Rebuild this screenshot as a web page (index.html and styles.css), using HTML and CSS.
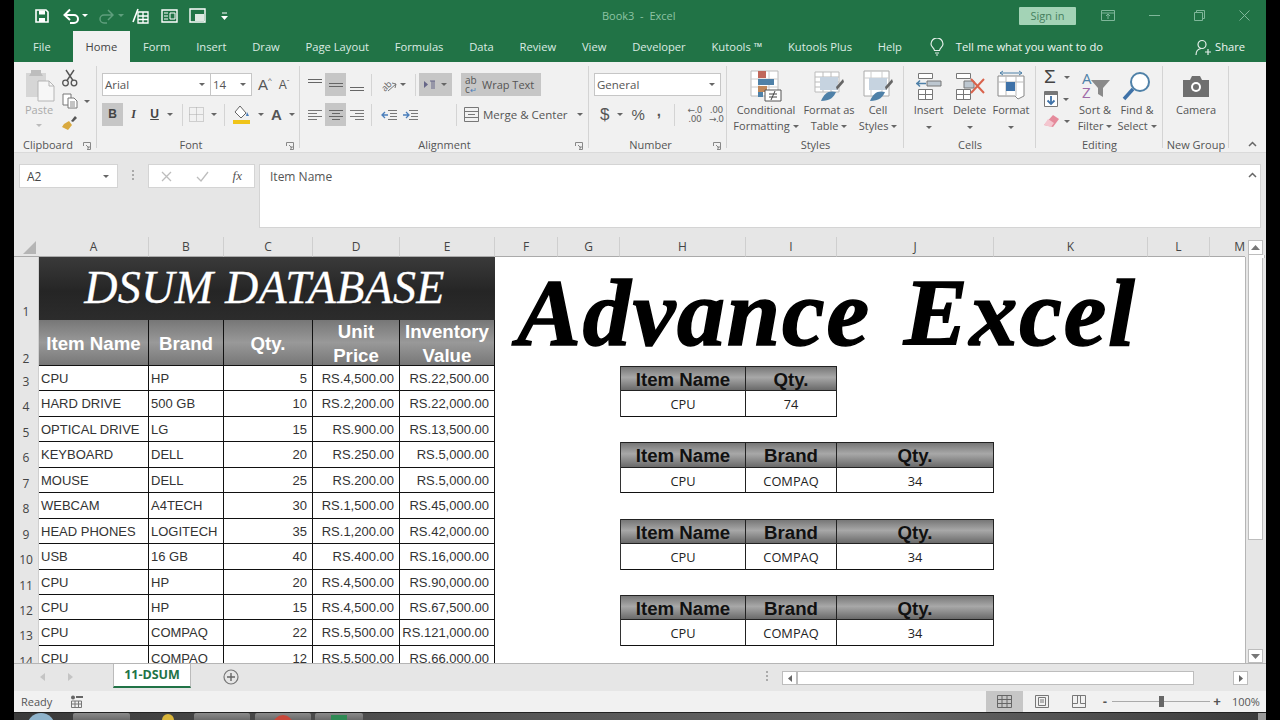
FILE: index.html
```html
<!DOCTYPE html>
<html>

<head>
    <meta charset='utf-8'>
    <title>Book3 - Excel</title>
    <meta name='viewport' content='width=device-width, initial-scale=1'>
    <link rel="stylesheet" href="styles.css">
</head>

<body>
    <div class="app">
        <div class="titlebar">
            <div class="qat">
                <svg width="16" height="16" viewBox="0 0 16 16"><path d="M2 2h10l2 2v10H2z" fill="none" stroke="#fff" stroke-width="1.6"/><path d="M5 2.500h6v4H5zM5 10h6v4H5z" fill="#fff"/></svg>
                <svg class="q_undo" width="17" height="16" viewBox="0 0 17 16"><path d="M2 7h9a4 4 0 0 1 0 8H7" fill="none" stroke="#fff" stroke-width="2"/><path d="M7 1.500L1.500 7 7 12" fill="none" stroke="#fff" stroke-width="2"/></svg>
                <span class="caret white"></span>
                <svg class="q_redo" width="16" height="16" viewBox="0 0 16 16"><path d="M14 7H6a4 4 0 0 0 0 8h3M10 2l5 5-5 5" fill="none" stroke="#5f9f7d" stroke-width="1.5"/></svg>
                <span class="caret faded"></span>
                <svg class="q_form" width="17" height="16" viewBox="0 0 17 16"><path d="M6 4h10v11H6zM6 8h10M6 11.500h10M11 4v11" fill="none" stroke="#fff" stroke-width="1.3"/><path d="M1 14L6 1" stroke="#fff" stroke-width="1.6"/></svg>
                <svg class="q_view" width="17" height="14" viewBox="0 0 17 14"><path d="M1 1h15v12H1z" fill="none" stroke="#fff" stroke-width="1.4"/><path d="M3 4h4M3 7h4M3 10h4M9 4h5v6H9z" fill="none" stroke="#fff"/></svg>
                <svg class="q_page" width="17" height="15" viewBox="0 0 17 15"><path d="M1 1h15v13H1z" fill="none" stroke="#fff" stroke-width="1.4"/><path d="M6 6h9v7H6z" fill="#dfe9e3"/></svg>
                <svg class="q_more" width="7" height="8" viewBox="0 0 7 8"><path d="M1 1h5" stroke="#fff"/><path d="M0 4h7L3.500 8z" fill="#fff"/></svg>
            </div>
            <div class="doc_title">Book3 &nbsp;-&nbsp; Excel</div>
            <div class="win_ctrls">
                <span class="signin">Sign in</span>
                <svg width="14" height="11" viewBox="0 0 14 11"><path d="M.5.500h13v10H.500zM.5 3h13M7 9V4M5 6l2-2 2 2" fill="none" stroke="#7fb79a"/></svg>
                <svg class="w_min" width="11" height="3" viewBox="0 0 11 3"><path d="M0 1.500h11" stroke="#7fb79a"/></svg>
                <svg class="w_max" width="11" height="11" viewBox="0 0 11 11"><path d="M.5 2.500h8v8h-8zM2.500 2.500v-2h8v8h-2" fill="none" stroke="#7fb79a"/></svg>
                <svg class="w_close" width="11" height="11" viewBox="0 0 11 11"><path d="M.5.500l10 10M10.500.500l-10 10" stroke="#7fb79a"/></svg>
            </div>
        </div>

        <div class="tabs">
            <span class="tab tab_file">File</span>
            <span class="tab active">Home</span>
            <span class="tab">Form</span>
            <span class="tab">Insert</span>
            <span class="tab">Draw</span>
            <span class="tab">Page Layout</span>
            <span class="tab">Formulas</span>
            <span class="tab">Data</span>
            <span class="tab">Review</span>
            <span class="tab">View</span>
            <span class="tab">Developer</span>
            <span class="tab">Kutools ™</span>
            <span class="tab">Kutools Plus</span>
            <span class="tab">Help</span>
            <svg class="bulb" width="14" height="18" viewBox="0 0 14 18"><path d="M4.500 12.500C4 9.500 1 9 1 6a6 6 0 0 1 12 0c0 3-3 3.500-3.500 6.500zM5 15h4M6 17h2" fill="none" stroke="#e4efe9" stroke-width="1.200"/></svg>
            <span class="tell">Tell me what you want to do</span>
            <span class="share">
                <svg width="16" height="17" viewBox="0 0 16 17"><circle cx="7" cy="5.500" r="4" fill="none" stroke="#e4efe9" stroke-width="1.200"/><path d="M1 16c0-4 2-6 5-6.500M10 13h6M13 10v6" fill="none" stroke="#e4efe9" stroke-width="1.200"/></svg>
                Share
            </span>
        </div>

        <div class="ribbon">
            <div class="group g_clip">
                <div class="g_body clip_body">
                    <div class="paste">
                        <svg width="30" height="34" viewBox="0 0 30 34"><path d="M1 5h20v24H1z" fill="#d6d6d6"/><path d="M6 5V2h10v3l2 3H4z" fill="#bdbdbd"/><path d="M13 13h11l5 5v15H13z" fill="#f7f7f7" stroke="#b5b5b5"/><path d="M24 13v5h5" fill="none" stroke="#b5b5b5"/></svg>
                        <span class="big_lbl">Paste</span>
                        <span class="caret faded_gray"></span>
                    </div>
                    <div class="clip_small">
                        <svg width="16" height="18" viewBox="0 0 16 18"><circle cx="3.500" cy="14" r="2.800" fill="none" stroke="#555" stroke-width="1.300"/><circle cx="12" cy="14" r="2.800" fill="none" stroke="#555" stroke-width="1.300"/><path d="M5 11.500L12 1M11 11.500L4 1" stroke="#555" stroke-width="1.400"/></svg>
                        <div class="copy_row">
                            <svg width="16" height="16" viewBox="0 0 16 16"><path d="M1 1h8v11H1z" fill="#fff" stroke="#777"/><path d="M6 5h6l3 3v7H6z" fill="#fff" stroke="#777"/><path d="M8 9h5M8 11h5M8 13h5" stroke="#888"/></svg>
                            <span class="caret"></span>
                        </div>
                        <svg width="16" height="16" viewBox="0 0 16 16"><path d="M9 6l4-5 2 2-4 4z" fill="#555"/><path d="M2 9l5-3 3 4-4 5-6-3z" fill="#d9a93e"/></svg>
                    </div>
                </div>
                <div class="g_label lbl_clip">Clipboard <svg class="launch" width="8" height="8" viewBox="0 0 8 8"><path d="M.5 4V.5H7.500V7.500H4M3 3l3 3M4 6h2V4" fill="none" stroke="#888"/></svg></div>
            </div>

            <div class="group g_font">
                <div class="g_body">
                    <div class="row">
                        <div class="combo font_name">Arial<span class="caret"></span></div>
                        <div class="combo font_size">14<span class="caret"></span></div>
                        <span class="glyph a_up">A<sup>^</sup></span>
                        <span class="glyph a_down">A<sup>ˇ</sup></span>
                    </div>
                    <div class="row">
                        <span class="btn on b_btn">B</span>
                        <span class="btn i_btn">I</span>
                        <span class="btn u_btn">U</span>
                        <span class="caret"></span>
                        <span class="vsep s1"></span>
                        <svg class="ic_border" width="15" height="15" viewBox="0 0 15 15"><path d="M.5.500h14v14H.500zM7.500.500v14M.5 7.500h14" fill="none" stroke="#aaa" stroke-dasharray="1 1"/></svg>
                        <span class="caret"></span>
                        <span class="vsep s2"></span>
                        <svg class="ic_fill" width="19" height="19" viewBox="0 0 19 19"><path d="M8 1l6 7-5 5-6-6z" fill="#fff" stroke="#666"/><path d="M15 7l2 4-3 0z" fill="#4a7ebb"/><path d="M1 15h17v4H1z" fill="#f0c419"/></svg>
                        <span class="caret"></span>
                        <span class="glyph a_color">A</span>
                        <span class="caret"></span>
                    </div>
                </div>
                <div class="g_label shift">Font<svg class="launch" width="8" height="8" viewBox="0 0 8 8"><path d="M.5 4V.5H7.500V7.500H4M3 3l3 3M4 6h2V4" fill="none" stroke="#888"/></svg></div>
            </div>

            <div class="group g_align">
                <div class="g_body">
                    <div class="row al_row">
                        <span class="al_btn"><svg width="14" height="14" viewBox="0 0 14 14"><path d="M0 1.500h14M0 4.500h14" stroke="#666"/></svg></span>
                        <span class="al_btn on"><svg width="14" height="14" viewBox="0 0 14 14"><path d="M0 5.500h14M0 8.500h14" stroke="#666"/></svg></span>
                        <span class="al_btn"><svg width="14" height="14" viewBox="0 0 14 14"><path d="M0 9.500h14M0 12.500h14" stroke="#666"/></svg></span>
                        <span class="vsep s3"></span>
                        <svg class="ic_orient" width="16" height="16" viewBox="0 0 16 16"><text x="1" y="12" class="orient_txt" transform="rotate(-45 6 10)">ab</text><path d="M7 14l8-7M11 6l4 1-1 4" fill="none" stroke="#777"/></svg>
                        <span class="caret"></span>
                        <span class="vsep s4"></span>
                        <span class="dir_btn on"><svg width="12" height="9" viewBox="0 0 12 9"><path d="M0 1l4 3.500L0 8z" fill="#668"/><path d="M6 1h5M8 1v8M10 1v8" stroke="#668"/></svg><span class="caret"></span></span>
                        <span class="wrap on">
                            <span class="wrap_ic">ab<br>c<i>↵</i></span>
                            Wrap Text
                        </span>
                    </div>
                    <div class="row al_row">
                        <span class="al_btn"><svg width="14" height="12" viewBox="0 0 14 12"><path d="M0 1.500h14M0 4.500h9M0 7.500h14M0 10.500h9" stroke="#777"/></svg></span>
                        <span class="al_btn on"><svg width="14" height="12" viewBox="0 0 14 12"><path d="M0 1.500h14M3 4.500h8M0 7.500h14M3 10.500h8" stroke="#666"/></svg></span>
                        <span class="al_btn"><svg width="14" height="12" viewBox="0 0 14 12"><path d="M0 1.500h14M5 4.500h9M0 7.500h14M5 10.500h9" stroke="#777"/></svg></span>
                        <span class="vsep s3"></span>
                        <svg class="ic_ind1" width="16" height="12" viewBox="0 0 16 12"><path d="M7 1.500h9M9 4.500h7M9 7.500h7M7 10.500h9" stroke="#777"/><path d="M7 6H1M4 3L1 6l3 3" fill="none" stroke="#4a7ebb" stroke-width="1.300"/></svg>
                        <svg class="ic_ind2" width="16" height="12" viewBox="0 0 16 12"><path d="M7 1.500h9M9 4.500h7M9 7.500h7M7 10.500h9" stroke="#777"/><path d="M1 6h6M4 3l3 3-3 3" fill="none" stroke="#4a7ebb" stroke-width="1.300"/></svg>
                        <span class="vsep s5"></span>
                        <span class="merge">
                            <svg width="15" height="15" viewBox="0 0 15 15"><path d="M.5.500h14v14H.500zM.5 4.500h14M.5 10.500h14M4 7.500h7" fill="none" stroke="#777"/></svg>
                            Merge &amp; Center
                            <span class="caret"></span>
                        </span>
                    </div>
                </div>
                <div class="g_label">Alignment<svg class="launch" width="8" height="8" viewBox="0 0 8 8"><path d="M.5 4V.5H7.500V7.500H4M3 3l3 3M4 6h2V4" fill="none" stroke="#888"/></svg></div>
            </div>

            <div class="group g_num">
                <div class="g_body">
                    <div class="row">
                        <div class="combo num_fmt">General<span class="caret"></span></div>
                    </div>
                    <div class="row">
                        <span class="glyph n_dollar">$</span>
                        <span class="caret"></span>
                        <span class="glyph n_pct">%</span>
                        <span class="glyph n_comma">,</span>
                        <span class="vsep s6"></span>
                        <span class="dec">←.0<br>.00</span>
                        <span class="dec">.00<br>→.0</span>
                    </div>
                </div>
                <div class="g_label shift">Number<svg class="launch" width="8" height="8" viewBox="0 0 8 8"><path d="M.5 4V.5H7.500V7.500H4M3 3l3 3M4 6h2V4" fill="none" stroke="#888"/></svg></div>
            </div>

            <div class="group g_styles">
                <div class="g_body big_row">
                    <div class="big w_cond">
                        <svg width="32" height="32" viewBox="0 0 32 32"><path d="M1 1h27v25H1z" fill="#fff" stroke="#bbb"/><path d="M9 1v25M19 1v25M1 9h27M1 17h27" stroke="#ccc"/><path d="M8 1h8v7H8z" fill="#c0675a"/><path d="M8 9h16v6H8z" fill="#4f81a8"/><path d="M8 16h9v6H8z" fill="#c0875a"/><path d="M8 22h5v5H8z" fill="#4f81a8"/><path d="M15 20h16v11H15z" fill="#fff" stroke="#555"/><path d="M19 24h8M19 27h8M25 21l-4 9" stroke="#444"/></svg>
                        <span class="big_lbl">Conditional<br>Formatting <span class="caret"></span></span>
                    </div>
                    <div class="big w_tbl">
                        <svg width="30" height="32" viewBox="0 0 30 32"><path d="M1 2h24v20H1z" fill="#fff" stroke="#bbb"/><path d="M1 7h24M1 12h24M1 17h24M9 2v20M17 2v20" stroke="#bbb"/><path d="M6 7h18v13H6z" fill="#c6d3e0"/><path d="M22 17l7-8 1 3-7 8z" fill="#666"/><path d="M7 31c3-8 8-11 15-9-2 5-6 9-15 9z" fill="#4f81a8"/></svg>
                        <span class="big_lbl">Format as<br>Table <span class="caret"></span></span>
                    </div>
                    <div class="big w_cell">
                        <svg width="30" height="32" viewBox="0 0 30 32"><path d="M1 1h25v25H1z" fill="#fff" stroke="#aaa"/><path d="M1 8h25M8 1v25M19 1v25" stroke="#ccc"/><path d="M6 8h18v12H6z" fill="#c6d3e0"/><path d="M22 17l7-8 1 3-7 8z" fill="#666"/><path d="M7 31c3-8 8-11 15-9-2 5-6 9-15 9z" fill="#4f81a8"/></svg>
                        <span class="big_lbl">Cell<br>Styles <span class="caret"></span></span>
                    </div>
                </div>
                <div class="g_label center">Styles</div>
            </div>

            <div class="group g_cells">
                <div class="g_body big_row">
                    <div class="big w_ins">
                        <svg width="28" height="28" viewBox="0 0 28 28"><path d="M3.500 1.500h14v5h-14zM3.500 17.500h14v10h-14zM10.500 17.500v10M3.500 22.500h14" fill="#fff" stroke="#777"/><path d="M12 9h14v5H12z" fill="#bdc7d0" stroke="#777"/><path d="M11 11.500H1M5 8.500l-3 3 3 3" fill="none" stroke="#4f81a8" stroke-width="1.500"/></svg>
                        <span class="big_lbl">Insert</span>
                        <span class="caret"></span>
                    </div>
                    <div class="big w_del">
                        <svg width="30" height="28" viewBox="0 0 30 28"><path d="M1.500 1.500h14v5h-14zM1.500 17.500h14v10h-14zM8.500 17.500v10M1.500 22.500h14" fill="#fff" stroke="#777"/><path d="M9 9h10v7H9z" fill="#bdc7d0" stroke="#777"/><path d="M16 7l13 14M29 7L16 21" stroke="#d9634c" stroke-width="2"/></svg>
                        <span class="big_lbl">Delete</span>
                        <span class="caret"></span>
                    </div>
                    <div class="big w_fmt">
                        <svg width="28" height="30" viewBox="0 0 28 30"><path d="M1 5h26v20l-6 3-3-3H1z" fill="#fff" stroke="#888"/><path d="M1 11h26M9 5v20M19 5v20" stroke="#bbb"/><path d="M9 11h9v9H9z" fill="#3f72a8"/><path d="M3 2h22M6 0L3 2l3 2M22 0l3 2-3 2" fill="none" stroke="#4f81a8"/></svg>
                        <span class="big_lbl">Format</span>
                        <span class="caret"></span>
                    </div>
                </div>
                <div class="g_label center">Cells</div>
            </div>

            <div class="group g_edit">
                <div class="g_body big_row">
                    <div class="edit_small">
                        <div class="edit_row"><span class="sigma">Σ</span><span class="caret"></span></div>
                        <div class="edit_row"><svg width="14" height="16" viewBox="0 0 14 16"><path d="M.5.500h13v15H.500z" fill="#fff" stroke="#777"/><path d="M.5 1h13v3H.500z" fill="#777"/><path d="M7 5v8M3.500 9.500L7 13l3.500-3.500" fill="none" stroke="#3f72a8" stroke-width="1.800"/></svg><span class="caret"></span></div>
                        <div class="edit_row"><svg width="15" height="12" viewBox="0 0 15 12"><path d="M9 0l6 4-6 8-9-2z" fill="#e58a9b"/><path d="M0 10l4-6 6 4-3 4z" fill="#f4c6cf"/></svg><span class="caret"></span></div>
                    </div>
                    <div class="big w_sort">
                        <svg width="30" height="30" viewBox="0 0 30 30"><text x="2" y="13" class="az_a">A</text><text x="2" y="27" class="az_z">Z</text><path d="M11 9h19l-7 8v9l-5-3v-6z" fill="#8a8a8a"/></svg>
                        <span class="big_lbl">Sort &amp;<br>Filter <span class="caret"></span></span>
                    </div>
                    <div class="big w_find">
                        <svg width="30" height="30" viewBox="0 0 30 30"><circle cx="18" cy="11" r="9" fill="#fff" stroke="#4f81a8" stroke-width="2"/><path d="M11 18L2 28" stroke="#3f72a8" stroke-width="3.500"/></svg>
                        <span class="big_lbl">Find &amp;<br>Select <span class="caret"></span></span>
                    </div>
                </div>
                <div class="g_label center">Editing</div>
            </div>

            <div class="group g_new">
                <div class="g_body big_row">
                    <div class="big w_cam">
                        <svg width="28" height="22" viewBox="0 0 28 22"><path d="M1 5h7l2-4h8l2 4h7v17H1z" fill="#6f6f6f"/><circle cx="14" cy="12" r="5" fill="#fff"/><circle cx="14" cy="12" r="3" fill="#6f6f6f"/></svg>
                        <span class="big_lbl">Camera</span>
                    </div>
                </div>
                <div class="g_label center">New Group</div>
            </div>
            <svg class="collapse" width="9" height="6" viewBox="0 0 9 6"><path d="M1 5l3.500-3.500L8 5" fill="none" stroke="#666" stroke-width="1.500"/></svg>
        </div>

        <div class="formula_bar">
            <div class="name_box">A2<span class="caret"></span></div>
            <div class="grip"></div>
            <div class="fx_box">
                <svg width="11" height="11" viewBox="0 0 11 11"><path d="M1 1l9 9M10 1l-9 9" stroke="#bdbdbd" stroke-width="1.300"/></svg>
                <svg width="13" height="11" viewBox="0 0 13 11"><path d="M1 6l4 4 7-9" fill="none" stroke="#bdbdbd" stroke-width="1.300"/></svg>
                <span class="fx">fx</span>
            </div>
            <div class="formula_input">Item Name
                <svg class="f_chev" width="9" height="6" viewBox="0 0 9 6"><path d="M1 5l3.500-3.500L8 5" fill="none" stroke="#666" stroke-width="1.500"/></svg>
            </div>
        </div>

        <div class="col_heads">
            <div class="corner"><svg width="13" height="13" viewBox="0 0 13 13"><path d="M13 0v13H0z" fill="#b5b5b5"/></svg></div>
            <div class="col ca">A</div>
            <div class="col cb">B</div>
            <div class="col cc">C</div>
            <div class="col cd">D</div>
            <div class="col ce">E</div>
            <div class="col cf">F</div>
            <div class="col cg">G</div>
            <div class="col ch">H</div>
            <div class="col ci">I</div>
            <div class="col cj">J</div>
            <div class="col ck">K</div>
            <div class="col cl">L</div>
            <div class="col cm">M</div>
            <div class="vs_up"><svg width="9" height="5" viewBox="0 0 9 5"><path d="M4.500 0L9 5H0z" fill="#777"/></svg></div>
        </div>

        <div class="sheet">
            <div class="row_nums">
                <div class="rn r1">1</div>
                <div class="rn r2">2</div>
                <div class="rn">3</div>
                <div class="rn">4</div>
                <div class="rn">5</div>
                <div class="rn">6</div>
                <div class="rn">7</div>
                <div class="rn">8</div>
                <div class="rn">9</div>
                <div class="rn">10</div>
                <div class="rn">11</div>
                <div class="rn">12</div>
                <div class="rn">13</div>
                <div class="rn">14</div>
            </div>

            <div class="db">
                <div class="db_title">DSUM DATABASE</div>
                <div class="hd">Item Name</div>
                <div class="hd">Brand</div>
                <div class="hd">Qty.</div>
                <div class="hd">Unit<br>Price</div>
                <div class="hd">Inventory<br>Value</div>

                <div class="td">CPU</div><div class="td">HP</div><div class="td num">5</div><div class="td num">RS.4,500.00</div><div class="td num">RS.22,500.00</div>
                <div class="td">HARD DRIVE</div><div class="td">500 GB</div><div class="td num">10</div><div class="td num">RS.2,200.00</div><div class="td num">RS.22,000.00</div>
                <div class="td">OPTICAL DRIVE</div><div class="td">LG</div><div class="td num">15</div><div class="td num">RS.900.00</div><div class="td num">RS.13,500.00</div>
                <div class="td">KEYBOARD</div><div class="td">DELL</div><div class="td num">20</div><div class="td num">RS.250.00</div><div class="td num">RS.5,000.00</div>
                <div class="td">MOUSE</div><div class="td">DELL</div><div class="td num">25</div><div class="td num">RS.200.00</div><div class="td num">RS.5,000.00</div>
                <div class="td">WEBCAM</div><div class="td">A4TECH</div><div class="td num">30</div><div class="td num">RS.1,500.00</div><div class="td num">RS.45,000.00</div>
                <div class="td">HEAD PHONES</div><div class="td">LOGITECH</div><div class="td num">35</div><div class="td num">RS.1,200.00</div><div class="td num">RS.42,000.00</div>
                <div class="td">USB</div><div class="td">16 GB</div><div class="td num">40</div><div class="td num">RS.400.00</div><div class="td num">RS.16,000.00</div>
                <div class="td">CPU</div><div class="td">HP</div><div class="td num">20</div><div class="td num">RS.4,500.00</div><div class="td num">RS.90,000.00</div>
                <div class="td">CPU</div><div class="td">HP</div><div class="td num">15</div><div class="td num">RS.4,500.00</div><div class="td num">RS.67,500.00</div>
                <div class="td">CPU</div><div class="td">COMPAQ</div><div class="td num">22</div><div class="td num">RS.5,500.00</div><div class="td num">RS.121,000.00</div>
                <div class="td">CPU</div><div class="td">COMPAQ</div><div class="td num">12</div><div class="td num">RS.5,500.00</div><div class="td num">RS.66,000.00</div>
            </div>

            <div class="right_side">
                <div class="big_title">Advance Excel</div>
                <div class="mini two">
                    <div class="m_hd">Item Name</div><div class="m_hd">Qty.</div>
                    <div class="m_td">CPU</div><div class="m_td">74</div>
                </div>
                <div class="mini three">
                    <div class="m_hd">Item Name</div><div class="m_hd">Brand</div><div class="m_hd">Qty.</div>
                    <div class="m_td">CPU</div><div class="m_td">COMPAQ</div><div class="m_td">34</div>
                </div>
                <div class="mini three">
                    <div class="m_hd">Item Name</div><div class="m_hd">Brand</div><div class="m_hd">Qty.</div>
                    <div class="m_td">CPU</div><div class="m_td">COMPAQ</div><div class="m_td">34</div>
                </div>
                <div class="mini three">
                    <div class="m_hd">Item Name</div><div class="m_hd">Brand</div><div class="m_hd">Qty.</div>
                    <div class="m_td">CPU</div><div class="m_td">COMPAQ</div><div class="m_td">34</div>
                </div>
            </div>

            <div class="vscroll">
                <div class="vs_thumb"></div>
                <div class="vs_down"><svg width="9" height="5" viewBox="0 0 9 5"><path d="M0 0h9L4.500 5z" fill="#777"/></svg></div>
            </div>
        </div>

        <div class="sheet_tabs">
            <svg class="nav_l" width="5" height="8" viewBox="0 0 5 8"><path d="M5 0v8L0 4z" fill="#c4c4c4"/></svg>
            <svg class="nav_r" width="5" height="8" viewBox="0 0 5 8"><path d="M0 0v8l5-4z" fill="#c4c4c4"/></svg>
            <div class="sheet_tab">11-DSUM</div>
            <svg class="add_sheet" width="16" height="16" viewBox="0 0 16 16"><circle cx="8" cy="8" r="7" fill="none" stroke="#777" stroke-width="1.200"/><path d="M8 4v8M4 8h8" stroke="#666" stroke-width="1.400"/></svg>
            <div class="grip small_grip"></div>
            <div class="hscroll">
                <div class="hs_btn"><svg width="4" height="7" viewBox="0 0 4 7"><path d="M4 0v7L0 3.500z" fill="#666"/></svg></div>
                <div class="hs_thumb"></div>
                <div class="hs_btn hs_end"><svg width="4" height="7" viewBox="0 0 4 7"><path d="M0 0v7l4-3.500z" fill="#666"/></svg></div>
            </div>
        </div>

        <div class="status">
            <span class="ready">Ready</span>
            <svg width="13" height="13" viewBox="0 0 13 13"><circle cx="3" cy="2.500" r="2" fill="#666"/><path d="M6 1h7v2H6z" fill="#666"/><path d="M1.500 6h10v6.500h-10zM1.500 9h10M5 6v6.500M8.500 6v6.500" fill="none" stroke="#777"/></svg>
            <div class="views">
                <span class="view on"><svg width="15" height="13" viewBox="0 0 15 13"><path d="M.5.500h14v12H.500zM.5 4.500h14M.5 8.500h14M5 .5v12M10 .5v12" fill="none" stroke="#666"/></svg></span>
                <span class="view"><svg width="14" height="13" viewBox="0 0 14 13"><path d="M.5.500h13v12H.500zM3.500 2.500h7v8h-7zM5 5h4M5 7h4" fill="none" stroke="#777"/></svg></span>
                <span class="view"><svg width="14" height="13" viewBox="0 0 14 13"><path d="M.5.500h13v12H.500zM.5 8.500h5v-8M13.500 8.500h-5v-8" fill="none" stroke="#777"/></svg></span>
            </div>
            <div class="zoom">
                <span class="z_sign">-</span>
                <div class="z_track"><span class="z_thumb"></span></div>
                <span class="z_sign">+</span>
                <span class="z_pct">100%</span>
            </div>
        </div>

        <div class="taskbar">
            <span class="orb"></span>
            <span class="task t1"></span>
            <span class="task_gap g1"><span class="gold"></span></span>
            <span class="task t2"></span>
            <span class="task t3"><span class="red"></span></span>
            <span class="task t4"><span class="green"></span></span>
            <span class="tray"></span>
        </div>
    </div>
</body>

</html>
```

FILE: styles.css
```css
* {
    margin: 0;
    padding: 0;
    box-sizing: border-box;
}

html, body {
    width: 1280px;
    height: 720px;
    overflow: hidden;
    background-color: black;
    font-family: "Open Sans", "Liberation Sans", sans-serif;
    font-size: 11px;
    color: #444;
}

svg {
    flex: none;
    display: block;
}

.app {
    width: 1252px;
    height: 720px;
    margin-left: 14px;
    display: flex;
    flex-direction: column;
}

.caret {
    display: inline-block;
    flex: none;
    width: 0;
    height: 0;
    border-left: 3px solid transparent;
    border-right: 3px solid transparent;
    border-top: 3px solid #666;
    vertical-align: middle;
}

.caret.white {
    border-top-color: #fff;
    margin-left: 2px;
}

.caret.faded {
    border-top-color: #5f9f7d;
    margin-left: 4px;
}

.caret.faded_gray {
    border-top-color: #bbb;
}

/* title bar */
.titlebar {
    height: 31px;
    background-color: #217346;
    display: flex;
    align-items: center;
    flex: none;
}

.qat {
    width: 575px;
    padding-left: 20px;
    display: flex;
    align-items: center;
}

.q_undo { margin-left: 13px; }
.q_redo { margin-left: 10px; }
.q_form { margin-left: 8px; }
.q_view { margin-left: 12px; }
.q_page { margin-left: 11px; }
.q_more { margin-left: 15px; }

.doc_title {
    width: 110px;
    padding-left: 13px;
    color: #8dc3a4;
    font-size: 11px;
    white-space: nowrap;
}

.win_ctrls {
    flex: 1;
    display: flex;
    align-items: center;
    padding-left: 320px;
}

.signin {
    width: 57px;
    height: 18px;
    background-color: #a3d3b6;
    color: #467f5f;
    font-size: 11px;
    line-height: 18px;
    text-align: center;
    margin-right: 25px;
    border-radius: 1px;
}

.w_min { margin-left: 34px; }
.w_max { margin-left: 34px; }
.w_close { margin-left: 34px; }

/* tabs */
.tabs {
    height: 31px;
    background-color: #217346;
    display: flex;
    align-items: stretch;
    flex: none;
    color: #dcebe3;
    font-size: 11.200px;
}

.tab {
    padding: 4px 12.900px 0;
    line-height: 24px;
    white-space: nowrap;
}

.tab_file {
    padding-left: 19px;
    padding-right: 22px;
}

.tab.active {
    background-color: #f1f1f1;
    color: #444;
}

.bulb {
    margin: 7px 0 0 15px;
}

.tell {
    margin-left: 12px;
    padding-top: 4px;
    line-height: 24px;
    white-space: nowrap;
    color: #eef5f1;
}

.share {
    margin-left: auto;
    width: 71px;
    padding-top: 4px;
    line-height: 24px;
    display: flex;
    gap: 4px;
    align-items: flex-start;
    color: #eef5f1;
}

.share svg {
    margin-top: 4px;
}

/* ribbon */
.ribbon {
    height: 91px;
    background-color: #f1f1f1;
    border-bottom: 1px solid #dadada;
    display: flex;
    flex: none;
    position: relative;
}

.group {
    margin-top: 4px;
    height: 86px;
    display: flex;
    flex-direction: column;
    flex: none;
    background-image: linear-gradient(#d4d4d4, #d4d4d4);
    background-size: 1px 82px;
    background-repeat: no-repeat;
    background-position: right top;
}

.g_body {
    height: 72px;
    padding-top: 7px;
}

.g_label {
    height: 14px;
    line-height: 14px;
    text-align: center;
    font-size: 11px;
    color: #555;
    position: relative;
}

.shift {
    padding-right: 15px;
}

.launch {
    position: absolute;
    right: 6px;
    top: 4px;
}

.g_clip { width: 83px; }
.g_font { width: 203px; }
.g_align { width: 289px; }
.g_num { width: 138px; }
.g_styles { width: 177px; }
.g_cells { width: 132px; }
.g_edit { width: 127px; }
.g_new { width: 66px; }

.lbl_clip {
    text-align: left;
    padding-left: 9px;
}

.clip_body {
    display: flex;
    padding-top: 2px;
    padding-left: 11px;
}

.paste {
    width: 34px;
    display: flex;
    flex-direction: column;
    align-items: flex-start;
}

.paste .big_lbl {
    color: #aaa;
}

.paste .caret {
    margin: 6px 0 0 11px;
}

.clip_small {
    margin-left: 3px;
    padding-top: 1px;
    display: flex;
    flex-direction: column;
    gap: 6px;
}

.copy_row {
    display: flex;
    align-items: center;
    gap: 6px;
}

.row {
    display: flex;
    align-items: center;
    height: 23px;
    padding-left: 5px;
}

.row + .row {
    margin-top: 7px;
}

.combo {
    height: 23px;
    background-color: #fff;
    border: 1px solid #c6c6c6;
    padding: 0 5px 0 2px;
    line-height: 21px;
    display: flex;
    align-items: center;
    justify-content: space-between;
    font-size: 11.500px;
    color: #555;
}

.font_name { width: 109px; }
.font_size { width: 42px; margin-left: -1px; }
.num_fmt { width: 127px; }

.glyph {
    color: #555;
    font-family: "Liberation Sans", sans-serif;
}

.glyph sup {
    font-size: 8px;
    vertical-align: top;
    line-height: 10px;
}

.a_up {
    font-size: 15px;
    margin-left: 6px;
}

.a_down {
    font-size: 12px;
    margin-left: 7px;
}

.btn {
    width: 21px;
    height: 23px;
    line-height: 23px;
    text-align: center;
    font-family: "Liberation Sans", sans-serif;
    font-size: 12px;
    color: #444;
}

.on {
    background-color: #c6c6c6;
}

.b_btn { font-weight: bold; }

.i_btn {
    font-family: "Liberation Serif", serif;
    font-style: italic;
    font-weight: bold;
}

.u_btn {
    text-decoration: underline;
    font-weight: bold;
}

.row .u_btn + .caret {
    margin-left: 2px;
}

.vsep {
    width: 1px;
    height: 22px;
    background-color: #d4d4d4;
    flex: none;
}

.s1 { margin: 0 6px 0 9px; }
.ic_border { margin-right: 7px; }
.s2 { margin: 0 7px 0 7px; }
.ic_fill { margin-right: 7px; }

.a_color {
    font-size: 15px;
    font-weight: bold;
    margin: 0 7px;
}

.al_row {
    padding-left: 4px;
}

.al_btn {
    width: 21px;
    height: 23px;
    display: flex;
    align-items: center;
    justify-content: center;
    flex: none;
}

.s3 { margin: 0 9px 0 4px; }

.ic_orient { margin-right: 3px; }
.s4 { margin: 0 3px 0 9px; }

.orient_txt {
    font-size: 9px;
    fill: #666;
    font-family: "Open Sans", sans-serif;
}

.dir_btn {
    width: 33px;
    height: 23px;
    display: flex;
    align-items: center;
    justify-content: center;
    gap: 5px;
}

.wrap {
    width: 80px;
    height: 23px;
    margin-left: 9px;
    display: flex;
    align-items: center;
    gap: 4px;
    padding-left: 4px;
    white-space: nowrap;
    font-size: 11px;
    color: #555;
}

.wrap_ic {
    font-size: 10px;
    line-height: 9px;
    color: #555;
    width: 13px;
}

.wrap_ic i {
    font-style: normal;
    font-size: 8px;
    color: #4a7ebb;
}

.ic_ind1 { margin-right: 5px; }
.ic_ind2 { margin-right: 38px; }
.s5 { margin-right: 7px; }

.merge {
    display: flex;
    align-items: center;
    gap: 4px;
    white-space: nowrap;
    font-size: 11.500px;
    color: #555;
}

.merge .caret {
    margin-left: 5px;
}

.n_dollar {
    font-size: 17px;
    margin-left: 6px;
    margin-right: 8px;
}

.n_pct {
    font-size: 15px;
    margin-left: 8px;
}

.n_comma {
    font-size: 15px;
    font-weight: bold;
    margin: -8px 0 0 12px;
}

.s6 { margin: 0 9px 0 13px; }

.dec {
    font-size: 9px;
    line-height: 9px;
    width: 24px;
    color: #666;
    font-family: "DejaVu Sans", sans-serif;
    letter-spacing: -.5px;
    text-align: center;
    white-space: nowrap;
}

.big_row {
    display: flex;
    padding-top: 4px;
}

.big {
    display: flex;
    flex-direction: column;
    align-items: center;
    flex: none;
}

.big svg {
    height: 32px;
}

.big_lbl {
    font-size: 11px;
    line-height: 15.500px;
    text-align: center;
    white-space: nowrap;
    color: #555;
}

.big_lbl .caret {
    margin-bottom: 1px;
}

.big > .caret {
    margin-top: 8px;
}

.w_cond { width: 64px; margin-left: 7px; }
.w_tbl { width: 62px; }
.w_cell { width: 36px; }

.w_ins { width: 41px; margin-left: 4px; }
.w_del { width: 41px; }
.w_fmt { width: 42px; }

.edit_small {
    width: 38px;
    margin-top: -3px;
    padding-left: 8px;
    display: flex;
    flex-direction: column;
    gap: 2px;
}

.edit_row {
    height: 20px;
    display: flex;
    align-items: center;
    gap: 5px;
}

.sigma {
    font-family: "Liberation Sans", sans-serif;
    font-size: 19px;
    color: #444;
    width: 15px;
}

.az_a {
    font-size: 15px;
    fill: #4f81a8;
    font-family: "Open Sans", sans-serif;
}

.az_z {
    font-size: 15px;
    fill: #a06aa8;
    font-family: "Open Sans", sans-serif;
}

.w_sort { width: 42px; }
.w_find { width: 42px; }
.w_cam { width: 66px; }

.w_sort svg {
    overflow: visible;
}

.w_cam svg {
    height: 24px;
    margin: 4px 0;
}

.collapse {
    position: absolute;
    right: 9px;
    bottom: 5px;
}

/* formula bar */
.formula_bar {
    height: 84px;
    background-color: #e6e6e6;
    display: flex;
    align-items: flex-start;
    padding: 11px 5px 0 5px;
    flex: none;
}

.name_box {
    width: 99px;
    height: 24px;
    background-color: #fff;
    border: 1px solid #d4d4d4;
    padding: 0 8px 0 7px;
    display: flex;
    align-items: center;
    justify-content: space-between;
    font-size: 12px;
}

.grip {
    width: 2px;
    height: 12px;
    margin: 6px 14px 0 14px;
    background-image: linear-gradient(#aaa 50%, transparent 50%);
    background-size: 2px 4px;
}

.fx_box {
    width: 107px;
    height: 24px;
    background-color: #fff;
    border: 1px solid #d4d4d4;
    display: flex;
    align-items: center;
    justify-content: space-between;
    padding: 0 12px;
}

.fx {
    font-family: "Liberation Serif", serif;
    font-style: italic;
    font-size: 13px;
    color: #555;
}

.formula_input {
    width: 1002px;
    height: 64px;
    margin-left: 4px;
    background-color: #fff;
    border: 1px solid #d4d4d4;
    padding: 3px 10px;
    font-size: 12px;
    color: #555;
    position: relative;
}

.f_chev {
    position: absolute;
    right: 3px;
    top: 7px;
}

/* column heads */
.col_heads {
    height: 20px;
    background-color: #e6e6e6;
    display: flex;
    flex: none;
}

.corner {
    width: 25px;
    padding: 4px 0 0 9px;
    border-bottom: 1px solid #aaa;
}

.col {
    border-right: 1px solid #cfcfcf;
    border-bottom: 1px solid #aaa;
    text-align: center;
    line-height: 20px;
    font-size: 12px;
    color: #444;
    overflow: hidden;
}

.ca { width: 110px; }
.cb { width: 75px; }
.cc { width: 89px; }
.cd { width: 87px; }
.ce { width: 95px; }
.cf { width: 63px; }
.cg { width: 62px; }
.ch { width: 126px; }
.ci { width: 91px; }
.cj { width: 157px; }
.ck { width: 154px; }
.cl { width: 62px; }
.cm { width: 35px; border-right: none; text-align: right; }

.vs_up {
    width: 15px;
    height: 15px;
    margin: 3px 0 0 3px;
    background-color: #fff;
    border: 1px solid #bdbdbd;
    display: flex;
    align-items: center;
    justify-content: center;
    position: relative;
}

.vs_up::after {
    content: "";
    position: absolute;
    left: -1px;
    top: 14px;
    width: 15px;
    height: 3px;
    background-color: #fff;
    border-left: 1px solid #bdbdbd;
    border-right: 1px solid #bdbdbd;
}

/* sheet */
.sheet {
    height: 406px;
    display: flex;
    overflow: hidden;
    flex: none;
}

.row_nums {
    width: 25px;
    flex: none;
    background-color: #e6e6e6;
    display: grid;
    grid-template-rows: 63px 46px repeat(12, 25.450px);
}

.rn {
    text-align: center;
    font-size: 12px;
    line-height: 17px;
    padding-top: 7px;
    color: #444;
    border-right: 1px solid #cfcfcf;
}

.r1 { padding-top: 46px; }
.r2 { padding-top: 30px; }

.db {
    width: 456px;
    flex: none;
    display: grid;
    grid-template-columns: 110px 75px 89px 87px 95px;
    grid-template-rows: 63px 46px repeat(12, 25.450px);
    font-family: "Liberation Sans", sans-serif;
}

.db_title {
    grid-column: 1 / span 5;
    background-image: linear-gradient(#3a3a3a, #252525 55%, #2c2c2c);
    color: #fff;
    font-family: "Liberation Serif", serif;
    font-style: italic;
    font-size: 46px;
    letter-spacing: .3px;
    -webkit-text-stroke: .3px #fff;
    line-height: 62px;
    padding-right: 5px;
    text-align: center;
    white-space: nowrap;
}

.hd {
    background-image: linear-gradient(#777, #999 50%, #777);
    color: #fff;
    font-weight: bold;
    font-size: 18.670px;
    line-height: 24px;
    padding-top: 2px;
    display: flex;
    align-items: center;
    justify-content: center;
    text-align: center;
    border-right: 1px solid #111;
    border-bottom: 1px solid #111;
    white-space: nowrap;
}

.td {
    background-color: #fff;
    font-size: 13px;
    color: #333;
    padding: 5px 2px 0;
    line-height: 16px;
    border-right: 1px solid #111;
    border-bottom: 1px solid #111;
    white-space: nowrap;
    overflow: hidden;
}

.num {
    text-align: right;
    padding-right: 5px;
}

.right_side {
    width: 750px;
    flex: none;
    background-color: #fff;
    padding-left: 125px;
}

.big_title {
    height: 109px;
    margin-left: -103px;
    font-family: "Liberation Serif", serif;
    font-style: italic;
    font-weight: bold;
    font-size: 96px;
    letter-spacing: 1.800px;
    -webkit-text-stroke: 1.500px #000;
    line-height: 112px;
    word-spacing: 7px;
    color: #000;
    white-space: nowrap;
}

.mini {
    display: grid;
    grid-template-rows: 25.450px 25.450px;
    font-family: "Liberation Sans", sans-serif;
    margin-bottom: 25.450px;
    border-left: 1px solid #333;
}

.two {
    width: 217px;
    grid-template-columns: 125px 91px;
}

.three {
    width: 374px;
    grid-template-columns: 125px 91px 157px;
}

.m_hd {
    background-image: linear-gradient(#777, #a8a8a8 45%, #6a6a6a);
    color: #111;
    font-weight: bold;
    font-size: 18.670px;
    line-height: 26px;
    text-align: center;
    border-top: 1px solid #222;
    border-right: 1px solid #222;
    border-bottom: 1px solid #222;
}

.m_td {
    font-family: "Open Sans", sans-serif;
    font-size: 12.800px;
    line-height: 26px;
    color: #222;
    text-align: center;
    border-right: 1px solid #222;
    border-bottom: 1px solid #111;
}

.vscroll {
    flex: 1;
    background-color: #e6e6e6;
    border-left: 1px solid #b5b5b5;
    padding: 0 0 0 2px;
    display: flex;
    flex-direction: column;
}

.vs_thumb {
    width: 15px;
    height: 283px;
    background-color: #fff;
    border: 1px solid #bdbdbd;
    border-top: none;
}

.vs_down {
    width: 15px;
    height: 14px;
    margin-top: auto;
    background-color: #fff;
    border: 1px solid #bdbdbd;
    display: flex;
    align-items: center;
    justify-content: center;
}

/* sheet tabs */
.sheet_tabs {
    height: 28px;
    background-color: #e6e6e6;
    border-top: 1px solid #b5b5b5;
    display: flex;
    align-items: flex-start;
    flex: none;
    padding-left: 26px;
}

.nav_l { margin-top: 9px; }
.nav_r { margin: 9px 0 0 23px; }

.sheet_tab {
    width: 78px;
    height: 24px;
    margin-left: 40px;
    background-color: #fff;
    border-right: 1px solid #bbb;
    border-left: 1px solid #bbb;
    border-bottom: 2px solid #217346;
    color: #217346;
    font-weight: bold;
    font-size: 12.500px;
    line-height: 22px;
    text-align: center;
}

.add_sheet { margin: 5px 0 0 32px; }

.small_grip {
    margin: 7px 14px 0 527px;
}

.hscroll {
    width: 466px;
    height: 14px;
    margin-top: 7px;
    display: flex;
}

.hs_btn {
    width: 15px;
    height: 14px;
    background-color: #fff;
    border: 1px solid #bdbdbd;
    display: flex;
    align-items: center;
    justify-content: center;
    flex: none;
}

.hs_thumb {
    width: 397px;
    background-color: #fff;
    border: 1px solid #bdbdbd;
}

.hs_end {
    margin-left: auto;
}

/* status bar */
.status {
    height: 21px;
    background-color: #f1f1f1;
    display: flex;
    align-items: center;
    flex: none;
    padding-left: 7px;
}

.ready {
    font-size: 11px;
    width: 49px;
    color: #555;
}

.views {
    display: flex;
    margin-left: 903px;
    height: 21px;
}

.view {
    width: 37px;
    height: 21px;
    display: flex;
    align-items: center;
    justify-content: center;
}

.zoom {
    display: flex;
    align-items: center;
    margin-left: 3px;
}

.z_sign {
    width: 10px;
    text-align: center;
    font-family: "Liberation Sans", sans-serif;
    font-weight: bold;
    font-size: 13px;
    color: #555;
}

.z_track {
    width: 98px;
    height: 1px;
    margin: 0 2px;
    background-color: #aaa;
    display: flex;
    align-items: center;
    justify-content: center;
}

.z_thumb {
    flex: none;
    width: 5px;
    height: 11px;
    background-color: #666;
}

.z_pct {
    margin-left: 10px;
    font-size: 11px;
    color: #555;
}

/* taskbar */
.taskbar {
    height: 8px;
    background-image: linear-gradient(90deg, #3a3a3a, #555 40%, #666 70%, #3a3a3a);
    border-top: 1px solid #222;
    display: flex;
    align-items: flex-start;
    overflow: hidden;
    flex: none;
}

.orb {
    flex: none;
    width: 28px;
    height: 28px;
    margin-left: 13px;
    border-radius: 50%;
    background-color: #8fb4cc;
}

.task {
    flex: none;
    height: 8px;
    border-radius: 2px 2px 0 0;
    background-image: linear-gradient(#8a8a8a, #666);
    display: flex;
    justify-content: center;
}

.task_gap {
    flex: none;
}

.gold {
    display: block;
    width: 12px;
    height: 12px;
    margin: 1px 0 0 32px;
    border-radius: 50%;
    background-color: #d9b53a;
}

.red {
    display: block;
    width: 20px;
    height: 20px;
    margin-top: 2px;
    border-radius: 50%;
    background-color: #c9483a;
}

.green {
    display: block;
    width: 16px;
    height: 8px;
    margin-top: 2px;
    background-color: #2f8a54;
}

.t1 { width: 57px; margin-left: 18px; }
.g1 { width: 64px; }
.t2 { width: 56px; }
.t3 { width: 56px; margin-left: 5px; }
.t4 { width: 48px; margin-left: 4px; }

.tray {
    flex: none;
    width: 8px;
    height: 8px;
    margin-left: auto;
    background-color: #999;
}
```
